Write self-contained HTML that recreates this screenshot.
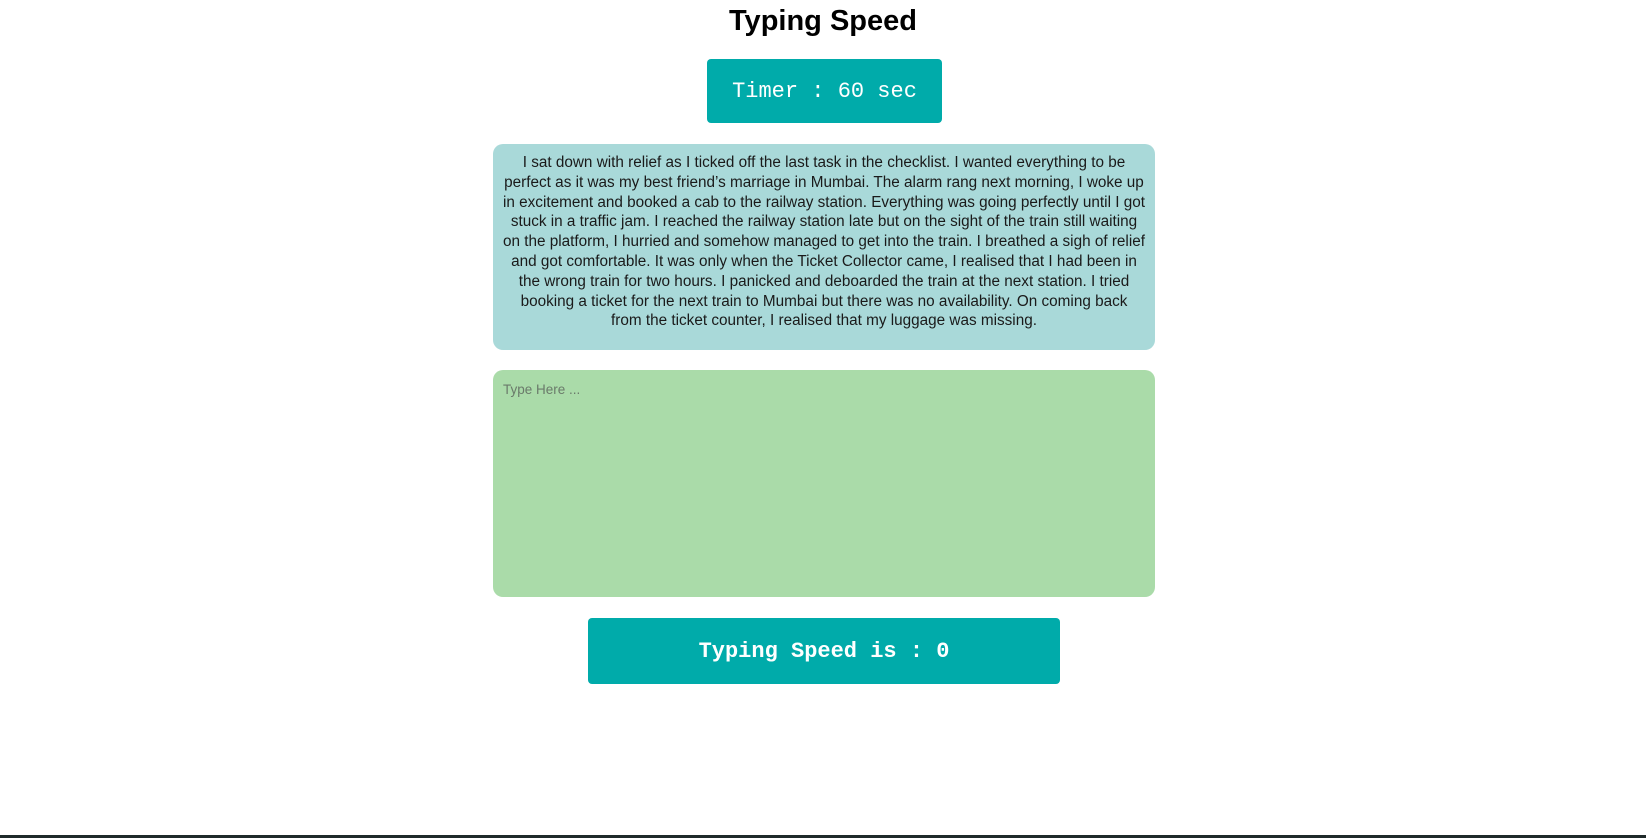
<!DOCTYPE html>
<html><head><meta charset="utf-8"><style>
body{margin:0;width:1646px;height:838px;background:#fff;position:relative;overflow:hidden;font-family:"Liberation Sans",sans-serif}
h1{position:absolute;left:0;width:1646px;top:5px;margin:0;text-align:center;font-size:29px;font-weight:bold;color:#000}
.timer{position:absolute;left:707px;top:59px;width:235px;height:64px;background:#00abaa;border-radius:4px;color:#fff;font-family:"Liberation Mono",monospace;font-size:22px;display:flex;align-items:center;justify-content:center}
.para{position:absolute;left:493px;top:144px;width:662px;height:206px;background:#a9d9d9;border-radius:10px;color:#1a1a1a;font-size:15.3px;line-height:19.8px;text-align:center;box-sizing:border-box;padding-top:9px;white-space:nowrap}
.ta{position:absolute;left:493px;top:370px;width:662px;height:227px;background:#aadba9;border-radius:10px}
.ph{position:absolute;left:10px;top:12px;font-size:13.5px;color:#6a7a6a}
.res{position:absolute;left:588px;top:618px;width:472px;height:66px;background:#00abaa;border-radius:4px;color:#fff;font-family:"Liberation Mono",monospace;font-weight:bold;font-size:22px;display:flex;align-items:center;justify-content:center}
.bar{position:absolute;left:0;bottom:0;width:1646px;height:3px;background:#1f2a2a}
</style></head><body>
<h1>Typing Speed</h1>
<div class="timer">Timer : 60 sec</div>
<div class="para">I sat down with relief as I ticked off the last task in the checklist. I wanted everything to be<br>perfect as it was my best friend’s marriage in Mumbai. The alarm rang next morning, I woke up<br>in excitement and booked a cab to the railway station. Everything was going perfectly until I got<br>stuck in a traffic jam. I reached the railway station late but on the sight of the train still waiting<br>on the platform, I hurried and somehow managed to get into the train. I breathed a sigh of relief<br>and got comfortable. It was only when the Ticket Collector came, I realised that I had been in<br>the wrong train for two hours. I panicked and deboarded the train at the next station. I tried<br>booking a ticket for the next train to Mumbai but there was no availability. On coming back<br>from the ticket counter, I realised that my luggage was missing.</div>
<div class="ta"><div class="ph">Type Here ...</div></div>
<div class="res">Typing Speed is : 0</div>
<div class="bar"></div>
</body></html>
